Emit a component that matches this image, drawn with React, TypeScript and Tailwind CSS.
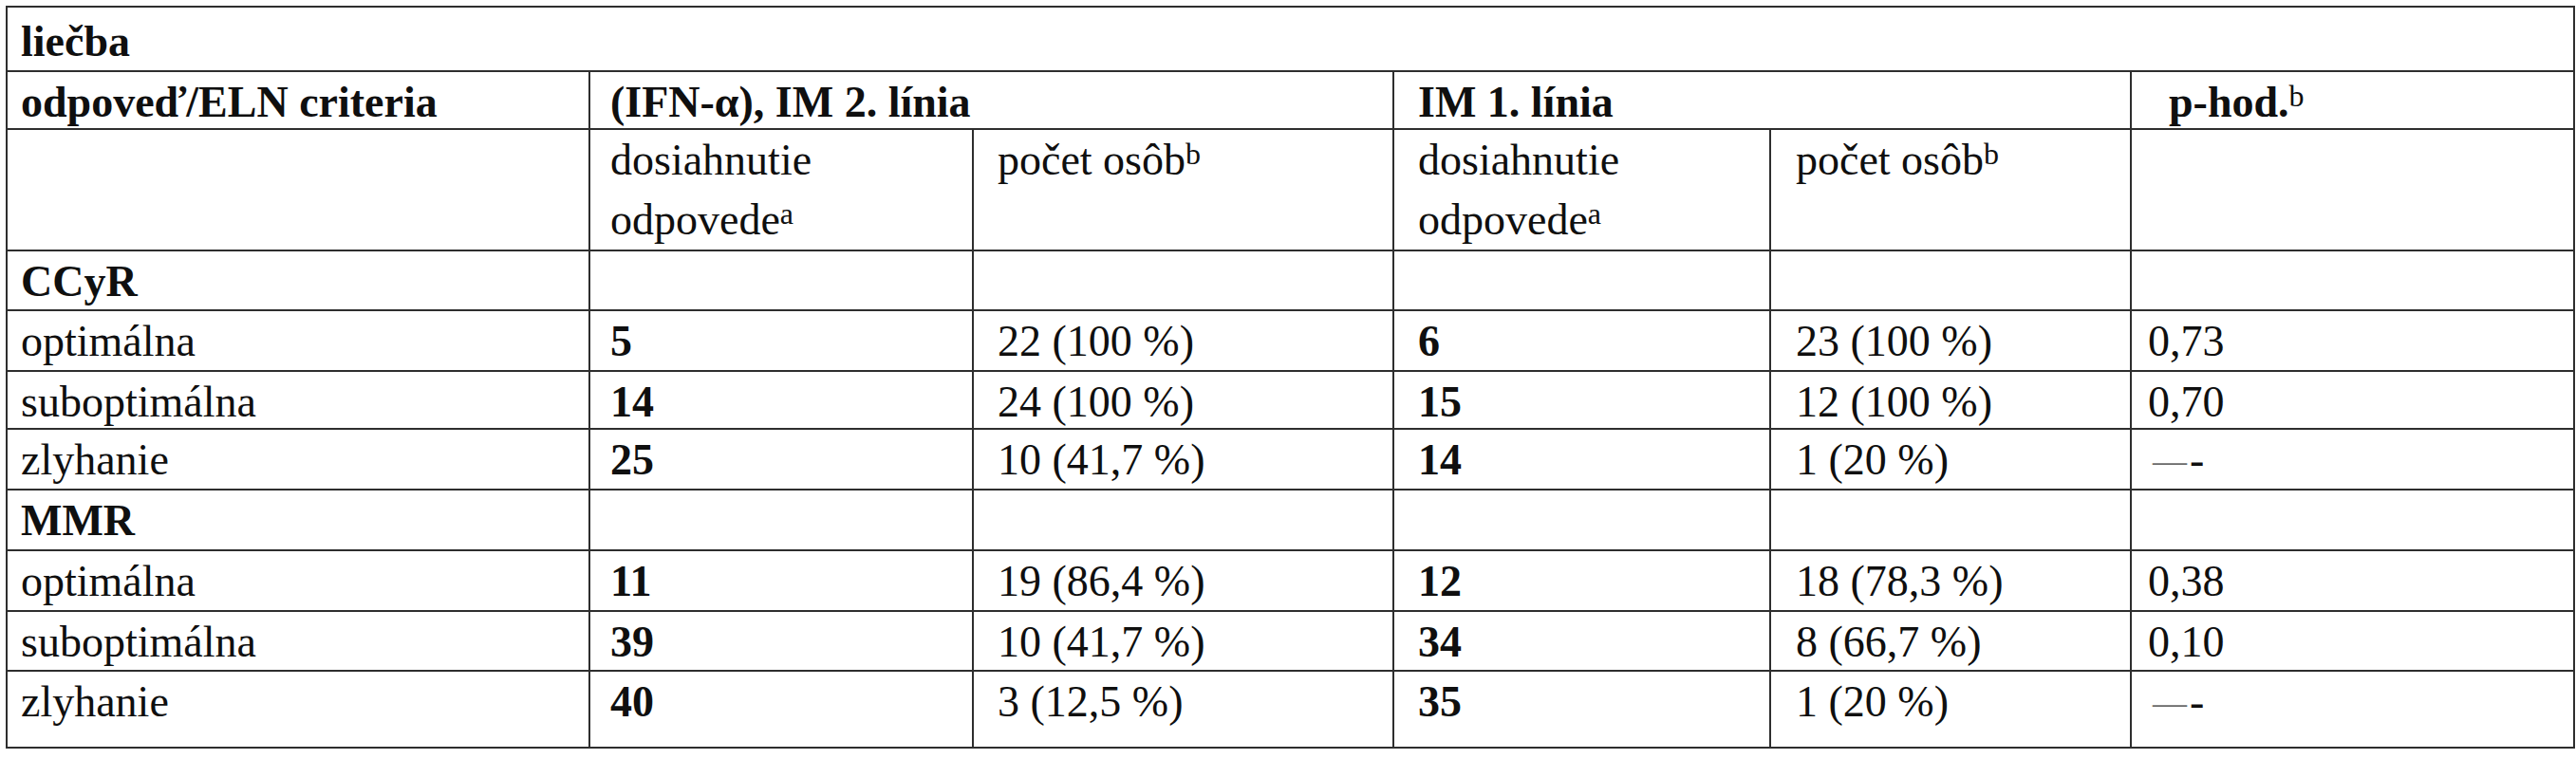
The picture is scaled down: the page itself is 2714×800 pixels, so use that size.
import React from 'react';

type DataRow = [string, string, string, string, string, string];

const groups: { title: string; rows: DataRow[] }[] = [
  {
    title: 'CCyR',
    rows: [
      ['optimálna', '5', '22 (100 %)', '6', '23 (100 %)', '0,73'],
      ['suboptimálna', '14', '24 (100 %)', '15', '12 (100 %)', '0,70'],
      ['zlyhanie', '25', '10 (41,7 %)', '14', '1 (20 %)', '—-'],
    ],
  },
  {
    title: 'MMR',
    rows: [
      ['optimálna', '11', '19 (86,4 %)', '12', '18 (78,3 %)', '0,38'],
      ['suboptimálna', '39', '10 (41,7 %)', '34', '8 (66,7 %)', '0,10'],
      ['zlyhanie', '40', '3 (12,5 %)', '35', '1 (20 %)', '—-'],
    ],
  },
];

// left padding per column, taken from the source layout
const pad = ['pl-[14px]', 'pl-[21px]', 'pl-[25px]', 'pl-[25px]', 'pl-[26px]', 'pl-[17px]'];

const Sup: React.FC<{ children: React.ReactNode }> = ({ children }) => (
  <span className="relative -top-[11px] text-[32px] font-normal leading-none">{children}</span>
);

const Cell: React.FC<{ col: number; bold?: boolean; children?: React.ReactNode }> = ({ col, bold, children }) => (
  <div className={`bg-white ${pad[col]} ${bold ? 'font-bold' : ''}`}>{children}</div>
);

const renderValue = (v: string) =>
  v === '—-' ? (
    <span className="pl-[5px]">
      <span className="relative -top-[2px] text-[36px] text-[#6b6b6b]">—</span>
      <span className="ml-[3px]">-</span>
    </span>
  ) : (
    v
  );

export default function App() {
  return (
    <div className="min-h-screen bg-white pl-[6px] pt-[6px] font-['Liberation_Serif','Times_New_Roman',serif] text-[46px] leading-[63px] text-[#0f0f0f]">
      <div className="grid w-fit grid-cols-[612px_402px_441px_395px_378px_465px] grid-rows-[66px_59px_126px_61px_62px_59px_62px_62px_62px_61px_79px] gap-[2px] bg-[#2e2e2e] p-[2px]">
        <div className="col-span-6 bg-white pl-[14px] pt-[4px] font-bold">liečba</div>

        <div className="bg-white pl-[14px] font-bold">odpoveď/ELN criteria</div>
        <div className="col-span-2 bg-white pl-[21px] font-bold">(IFN-α), IM 2. línia</div>
        <div className="col-span-2 bg-white pl-[25px] font-bold">IM 1. línia</div>
        <div className="bg-white pl-[39px] font-bold">
          p-hod.<Sup>b</Sup>
        </div>

        <Cell col={0} />
        <Cell col={1}>
          dosiahnutie
          <br />
          odpovede<Sup>a</Sup>
        </Cell>
        <Cell col={2}>
          počet osôb<Sup>b</Sup>
        </Cell>
        <Cell col={3}>
          dosiahnutie
          <br />
          odpovede<Sup>a</Sup>
        </Cell>
        <Cell col={4}>
          počet osôb<Sup>b</Sup>
        </Cell>
        <Cell col={5} />

        {groups.map((g) => (
          <React.Fragment key={g.title}>
            <Cell col={0} bold>
              {g.title}
            </Cell>
            {[1, 2, 3, 4, 5].map((c) => (
              <Cell key={c} col={c} />
            ))}
            {g.rows.map((r, i) => (
              <React.Fragment key={i}>
                {r.map((v, c) => (
                  <Cell key={c} col={c} bold={c === 1 || c === 3}>
                    {renderValue(v)}
                  </Cell>
                ))}
              </React.Fragment>
            ))}
          </React.Fragment>
        ))}
      </div>
    </div>
  );
}
